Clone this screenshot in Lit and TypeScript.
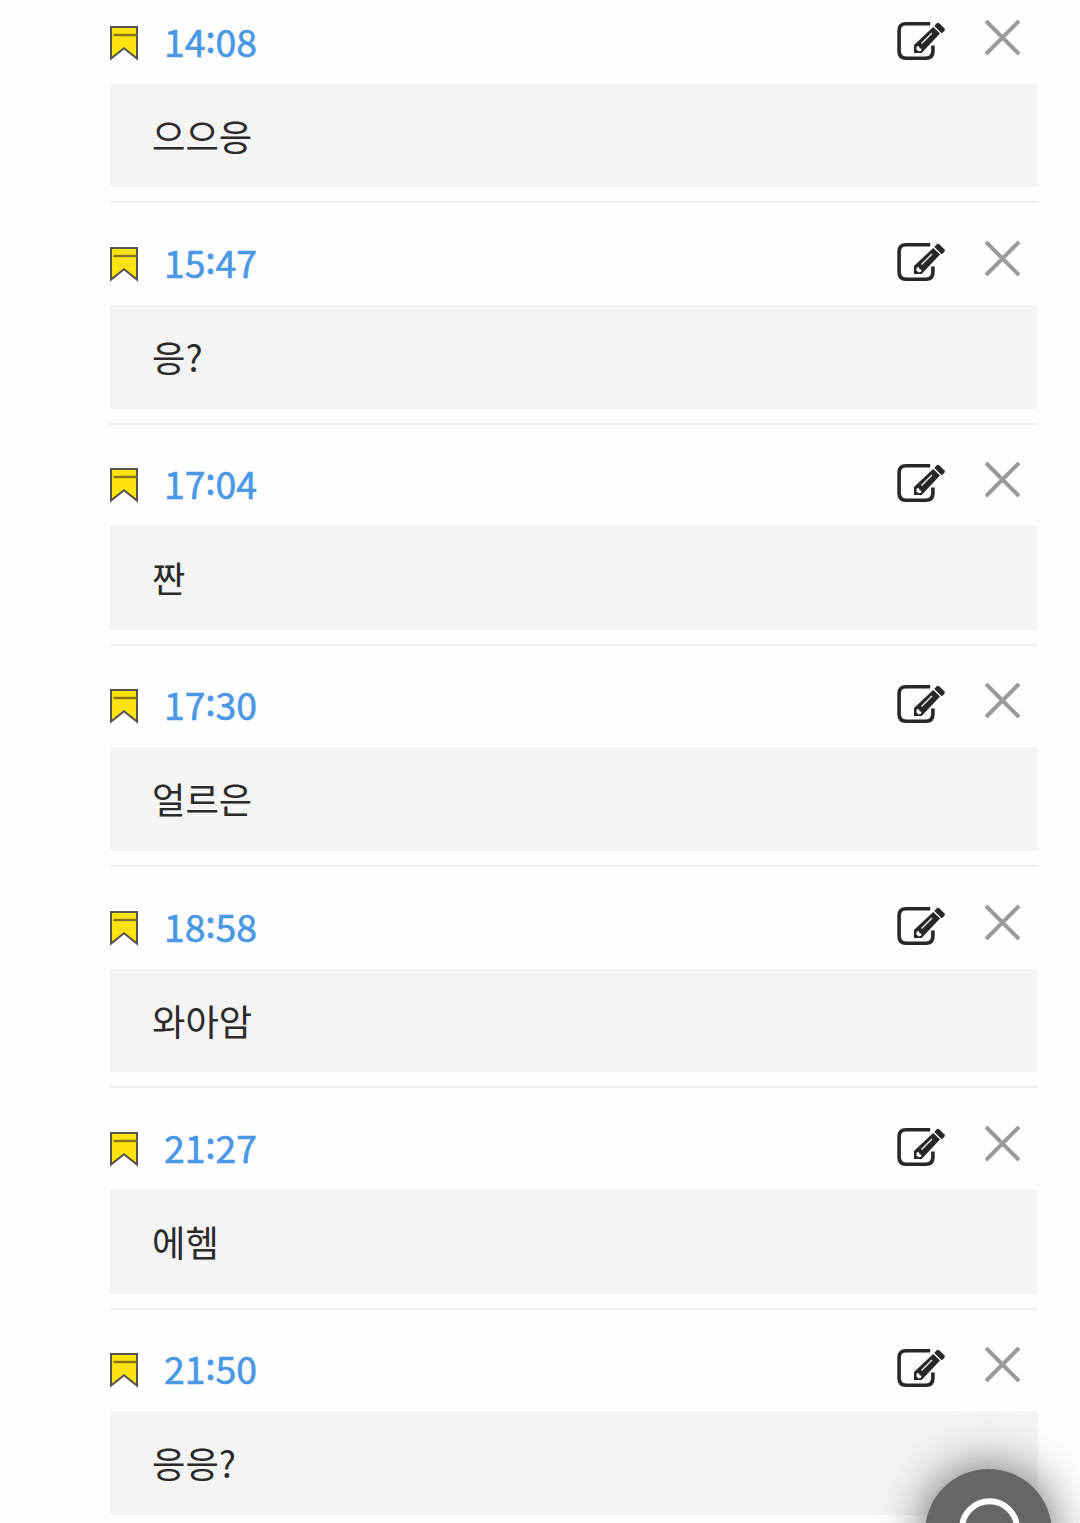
import { LitElement, html, css } from 'lit';
import { customElement, property } from 'lit/decorators.js';

interface Bookmark {
  time: string;
  memo: string;
}

@customElement('bookmark-item')
export class BookmarkItem extends LitElement {
  @property()
  time = '';

  @property()
  memo = '';

  static override styles = css`
    :host {
      display: block;
      box-sizing: border-box;
      height: 221.25px;
      border-bottom: 2px solid #eeeeef;
    }

    .head {
      display: flex;
      align-items: flex-start;
      height: 101.5px;
      box-sizing: border-box;
      padding-top: 37.5px;
    }

    .flag {
      flex: none;
      margin-top: 6px;
    }

    .time {
      flex: 1;
      margin-left: 26px;
      color: #4998e6;
      font-size: 37.4px;
      font-weight: 400;
      line-height: 42px;
      letter-spacing: -0.1px;
      -webkit-text-stroke: 0.6px #4998e6;
    }

    .colon {
      line-height: 0;
      vertical-align: 4.5px;
    }

    button {
      display: flex;
      padding: 0;
      border: 0;
      background: none;
      cursor: pointer;
    }

    svg {
      overflow: visible;
    }

    .remove {
      margin: -1px 17px 0 38px;
    }

    .memo {
      display: flex;
      align-items: center;
      height: 103.8px;
      box-sizing: border-box;
      padding: 0 42px 2px;
      background: #f4f4f4;
      color: #2b292a;
      font-size: 36.3px;
    }
  `;

  override render() {
    const [min, sec] = this.time.split(':');
    return html`
      <div class="head">
        <svg class="flag" width="28" height="35" viewBox="0 0 28 35">
          <path d="M1 1H27V32.6L14 22.3L1 32.6Z" fill="#ffe311" stroke="#55544e" stroke-width="2" />
          <path d="M3.5 9H27" stroke="#80731b" stroke-width="2.4" />
        </svg>
        <span class="time">${min}<span class="colon">:</span>${sec}</span>
        <button class="edit" aria-label="edit">
          <svg width="50" height="42" viewBox="0 0 50 42" fill="none">
            <path d="M34.2 3.8H10Q3.1 3.8 3.1 10.7V31.3Q3.1 38.2 10 38.2H30Q36.9 38.2 36.9 31.3V25.500" stroke="#272727" stroke-width="3.600" />
            <path d="M18 25.100L37.200 7L44 13.500L25.600 33H18Z" fill="#272727" />
            <path d="M38.300 6L40.700 3.300Q42 2.200 43.200 3.300L48.300 8.300Q49.500 9.600 48.300 10.900L45.700 13.200Z" fill="#272727" />
            <path d="M25.500 23.500L36 13" stroke="#fff" stroke-width="1.300" />
            <path d="M20.800 26.300L23 26.300L23.600 28.200L25.500 28.800L25 30.700L22.800 31.500L20.300 29.300Z" fill="#fff" />
          </svg>
        </button>
        <button class="remove" aria-label="delete">
          <svg width="37" height="37" viewBox="0 0 37 37">
            <path d="M2 2L35 35M35 2L2 35" stroke="#9a9a9a" stroke-width="4" />
          </svg>
        </button>
      </div>
      <div class="memo">${this.memo}</div>
    `;
  }
}

@customElement('app-root')
export class AppRoot extends LitElement {
  @property({ attribute: false })
  bookmarks: Bookmark[] = [
    { time: '14:08', memo: '으으응' },
    { time: '15:47', memo: '응?' },
    { time: '17:04', memo: '짠' },
    { time: '17:30', memo: '얼르은' },
    { time: '18:58', memo: '와아암' },
    { time: '21:27', memo: '에헴' },
    { time: '21:50', memo: '응응?' },
  ];

  static override styles = css`
    :host {
      display: block;
      position: relative;
      height: 1523px;
      overflow: hidden;
      background: #fefefe;
      font-family: 'Noto Sans CJK KR', sans-serif;
    }

    /* the list is scrolled a little, so the first row starts above the edge */
    .list {
      margin: -17.9px 42px 0 110px;
    }

    .search {
      position: absolute;
      top: 1469px;
      left: 925px;
      width: 127px;
      height: 127px;
      padding: 0;
      border: 0;
      border-radius: 50%;
      background: #666;
      box-shadow: 0 0 50px rgba(0, 0, 0, 0.62);
    }
  `;

  override render() {
    return html`
      <div class="list">
        ${this.bookmarks.map(
          (b) => html`<bookmark-item .time=${b.time} .memo=${b.memo}></bookmark-item>`
        )}
      </div>
      <button class="search" aria-label="search">
        <svg width="127" height="127" viewBox="0 0 127 127" fill="none">
          <circle cx="64.5" cy="59.7" r="27.5" stroke="#fff" stroke-width="6" />
          <path d="M84 79L97 92" stroke="#fff" stroke-width="6" />
        </svg>
      </button>
    `;
  }
}
